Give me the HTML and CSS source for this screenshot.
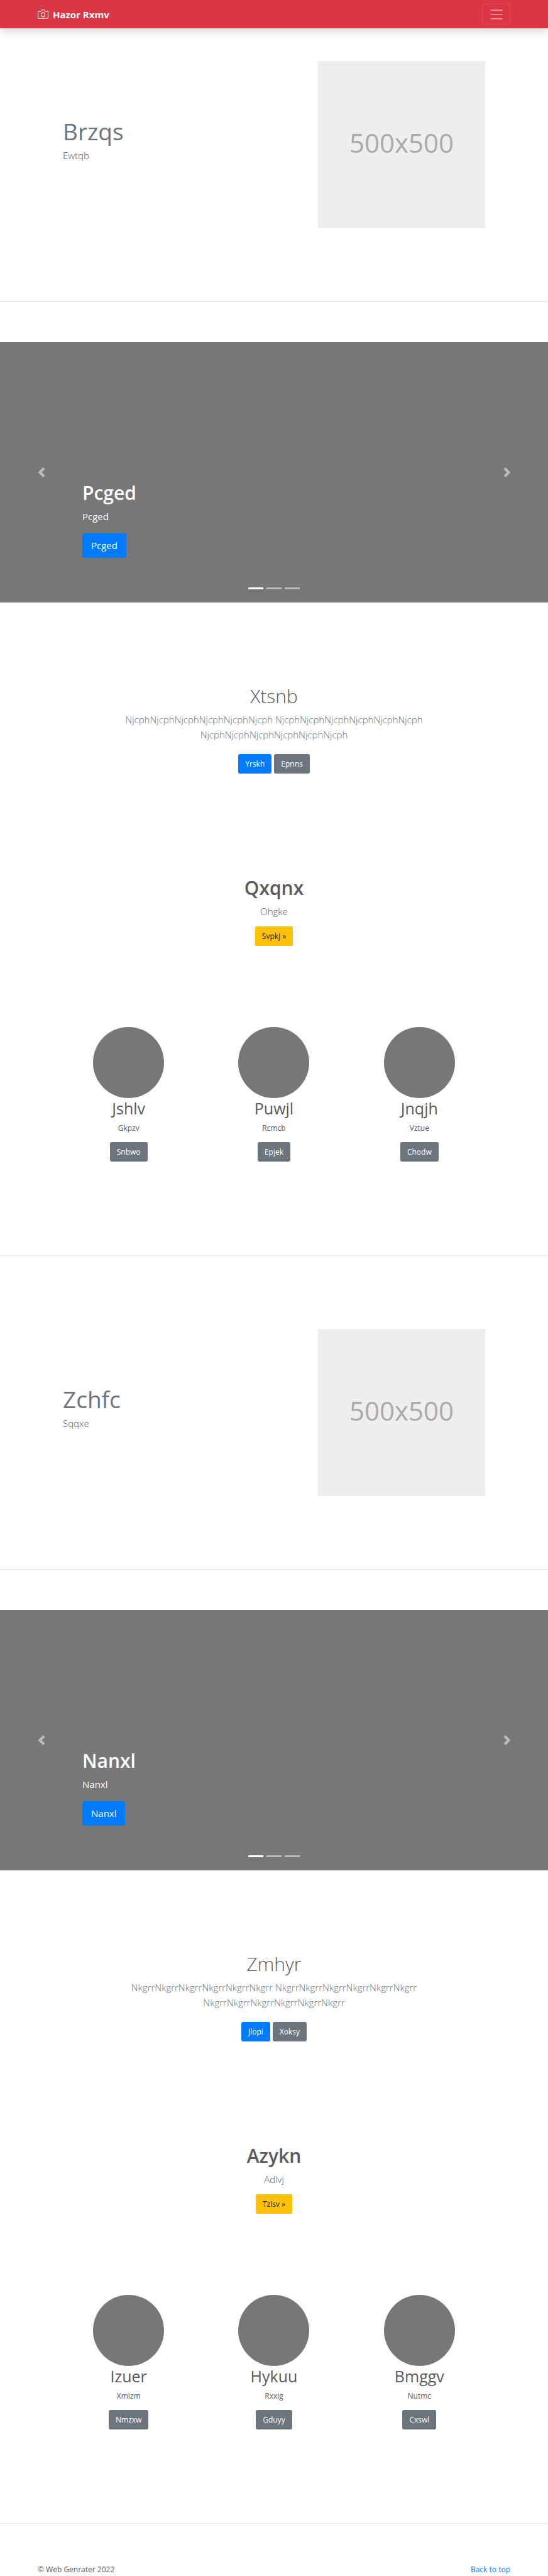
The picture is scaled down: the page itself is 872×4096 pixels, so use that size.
FILE: index.html
```html
<!DOCTYPE html>
<html lang="en">
<head>
<meta charset="utf-8">
<meta name="viewport" content="width=device-width, initial-scale=1">
<title>Hazor Rxmv</title>
<link rel="stylesheet" href="styles.css">
</head>
<body>
<header class="navbar" id="top">
  <a class="brand" href="#">
    <svg class="brand-icon" viewBox="0 0 20 17" fill="none" stroke="currentColor" stroke-width="1.300" aria-hidden="true">
      <path d="M2 3.200h3.100c.5 0 .8-.3 1-.7l.5-1.100c.2-.5.6-.8 1.100-.8h4.600c.5 0 .9.300 1.100.8l.5 1.100c.2.400.5.700 1 .700H18c.8 0 1.400.600 1.400 1.400v10.400c0 .8-.6 1.400-1.400 1.400H2c-.8 0-1.400-.6-1.400-1.400V4.600c0-.8.6-1.400 1.400-1.400z"/>
      <circle cx="10" cy="9.300" r="3.600"/>
    </svg>
    <strong>Hazor Rxmv</strong>
  </a>
  <button class="toggler" type="button" aria-label="Toggle navigation">
    <svg class="toggler-icon" viewBox="0 0 30 30" stroke="currentColor" stroke-width="2" stroke-linecap="square" aria-hidden="true"><path d="M5 7h20M5 15h20M5 23h20"/></svg>
  </button>
</header>
<main>
  <section class="featurette">
    <div class="featurette-text">
      <h2 class="featurette-title">Brzqs</h2>
      <p class="lead">Ewtqb</p>
    </div>
    <div class="placeholder" role="img" aria-label="500x500">500x500</div>
  </section>
  <hr class="divider">
  <section class="carousel">
    <button class="control" type="button" aria-label="Previous"><svg class="chevron" viewBox="0 0 8 8" fill="currentColor" aria-hidden="true"><path d="M5.250 0l-4 4 4 4 1.500-1.500L4.250 4l2.500-2.500L5.250 0z"/></svg></button>
    <div class="caption">
      <h1 class="title title-bold">Pcged</h1>
      <p class="caption-text">Pcged</p>
      <a class="btn btn-lg btn-primary" href="#">Pcged</a>
    </div>
    <button class="control" type="button" aria-label="Next"><svg class="chevron" viewBox="0 0 8 8" fill="currentColor" aria-hidden="true"><path d="M2.750 0l-1.500 1.500L3.750 4l-2.500 2.500L2.750 8l4-4-4-4z"/></svg></button>
    <div class="indicators"><span class="dot active"></span><span class="dot"></span><span class="dot"></span></div>
  </section>
  <section class="intro">
    <h1 class="title title-light">Xtsnb</h1>
    <p class="lead intro-text">NjcphNjcphNjcphNjcphNjcphNjcph NjcphNjcphNjcphNjcphNjcphNjcph NjcphNjcphNjcphNjcphNjcphNjcph</p>
    <div class="actions"><a class="btn btn-primary" href="#">Yrskh</a><a class="btn btn-secondary" href="#">Epnns</a></div>
  </section>
  <section class="callout">
    <h1 class="title title-bold">Qxqnx</h1>
    <p class="lead">Ohgke</p>
    <a class="btn btn-warning" href="#">Svpkj »</a>
  </section>
  <section class="columns">
    <article class="column"><div class="avatar"></div><h2 class="column-title">Jshlv</h2><p class="column-text">Gkpzv</p><a class="btn btn-secondary" href="#">Snbwo</a></article>
    <article class="column"><div class="avatar"></div><h2 class="column-title">Puwjl</h2><p class="column-text">Rcmcb</p><a class="btn btn-secondary" href="#">Epjek</a></article>
    <article class="column"><div class="avatar"></div><h2 class="column-title">Jnqjh</h2><p class="column-text">Vztue</p><a class="btn btn-secondary" href="#">Chodw</a></article>
  </section>
  <hr class="divider">
  <section class="featurette featurette-spaced">
    <div class="featurette-text">
      <h2 class="featurette-title">Zchfc</h2>
      <p class="lead">Sqqxe</p>
    </div>
    <div class="placeholder" role="img" aria-label="500x500">500x500</div>
  </section>
  <hr class="divider">
  <section class="carousel">
    <button class="control" type="button" aria-label="Previous"><svg class="chevron" viewBox="0 0 8 8" fill="currentColor" aria-hidden="true"><path d="M5.250 0l-4 4 4 4 1.500-1.500L4.250 4l2.500-2.500L5.250 0z"/></svg></button>
    <div class="caption">
      <h1 class="title title-bold">Nanxl</h1>
      <p class="caption-text">Nanxl</p>
      <a class="btn btn-lg btn-primary" href="#">Nanxl</a>
    </div>
    <button class="control" type="button" aria-label="Next"><svg class="chevron" viewBox="0 0 8 8" fill="currentColor" aria-hidden="true"><path d="M2.750 0l-1.500 1.500L3.750 4l-2.500 2.500L2.750 8l4-4-4-4z"/></svg></button>
    <div class="indicators"><span class="dot active"></span><span class="dot"></span><span class="dot"></span></div>
  </section>
  <section class="intro">
    <h1 class="title title-light">Zmhyr</h1>
    <p class="lead intro-text">NkgrrNkgrrNkgrrNkgrrNkgrrNkgrr NkgrrNkgrrNkgrrNkgrrNkgrrNkgrr NkgrrNkgrrNkgrrNkgrrNkgrrNkgrr</p>
    <div class="actions"><a class="btn btn-primary" href="#">Jlopi</a><a class="btn btn-secondary" href="#">Xoksy</a></div>
  </section>
  <section class="callout">
    <h1 class="title title-bold">Azykn</h1>
    <p class="lead">Adlvj</p>
    <a class="btn btn-warning" href="#">Tzisv »</a>
  </section>
  <section class="columns">
    <article class="column"><div class="avatar"></div><h2 class="column-title">Izuer</h2><p class="column-text">Xmizm</p><a class="btn btn-secondary" href="#">Nmzxw</a></article>
    <article class="column"><div class="avatar"></div><h2 class="column-title">Hykuu</h2><p class="column-text">Rxxig</p><a class="btn btn-secondary" href="#">Gduyy</a></article>
    <article class="column"><div class="avatar"></div><h2 class="column-title">Bmggv</h2><p class="column-text">Nutmc</p><a class="btn btn-secondary" href="#">Cxswl</a></article>
  </section>
  <hr class="divider">
</main>
<footer class="footer">
  <span>© Web Genrater 2022</span>
  <a class="footer-link" href="#top">Back to top</a>
</footer>
</body>
</html>
```
FILE: styles.css
```css
* {
  box-sizing: border-box;
}

body {
  margin: 0;
  background: #fff;
  color: #5a5a5a;
  font: 12px/20px "Segoe UI", "Open Sans", "Noto Sans", sans-serif;
}

h1, h2, p {
  margin: 0;
}

a {
  color: #007bff;
  text-decoration: none;
}

/* Navigation bar */
.navbar {
  display: flex;
  align-items: center;
  justify-content: space-between;
  height: 45px;
  padding: 0 60px;
  background: #dc3545;
  box-shadow: 0 6px 13px rgba(0, 0, 0, .15);
}

.brand {
  display: flex;
  align-items: center;
  gap: 7px;
  color: #fff;
  font-size: 15px;
}

.brand-icon {
  width: 17px;
  height: 15px;
}

.toggler {
  display: flex;
  align-items: center;
  justify-content: center;
  width: 45px;
  height: 33px;
  padding: 0;
  border: 1px solid rgba(255, 255, 255, .1);
  border-radius: 3px;
  background: transparent;
  color: rgba(255, 255, 255, .5);
}

.toggler-icon {
  width: 26px;
  height: 26px;
}

/* Featurette */
.featurette {
  display: flex;
  justify-content: space-between;
  padding: 52px 100px 116px;
}

.featurette-spaced {
  padding-top: 116px;
}

.featurette-text {
  padding-top: 88px;
}

.featurette-title {
  margin-bottom: 2px;
  color: #6c757d;
  font-size: 37px;
  font-weight: 400;
  line-height: 48px;
}

.lead {
  font-size: 15px;
  font-weight: 300;
  line-height: 24px;
}

.placeholder {
  display: flex;
  align-items: center;
  justify-content: center;
  width: 266px;
  height: 266px;
  padding-bottom: 6px;
  background: #eee;
  color: #aaa;
  font-size: 42px;
}

.divider {
  height: 1px;
  margin: 0;
  border: 0;
  background: rgba(0, 0, 0, .1);
}

/* Carousel */
.carousel {
  position: relative;
  display: grid;
  grid-template-columns: 131px 1fr 131px;
  min-height: 414px;
  margin-top: 64px;
  background: #777;
  color: #fff;
}

.control {
  padding: 0;
  border: 0;
  background: transparent;
  color: rgba(255, 255, 255, .5);
}

.chevron {
  display: block;
  width: 16px;
  height: 16px;
  margin: 0 auto;
}

.caption {
  align-self: end;
  padding-bottom: 71px;
}

.caption-text {
  margin: 6px 0 15px;
  font-size: 15px;
  line-height: 24px;
}

.indicators {
  position: absolute;
  right: 0;
  bottom: 21px;
  left: 0;
  display: flex;
  justify-content: center;
  gap: 5px;
}

.dot {
  width: 24px;
  height: 3px;
  background: rgba(255, 255, 255, .5);
}

.dot.active {
  background: #fff;
}

.title {
  font-size: 30px;
  line-height: 38px;
}

.title-bold {
  font-weight: 600;
}

.title-light {
  font-weight: 300;
}

/* Buttons */
.btn {
  display: inline-block;
  padding: 5px 11px;
  border-radius: 3px;
  color: #fff;
  line-height: 21px;
}

.btn-lg {
  padding: 7px 14px;
  border-radius: 4px;
  font-size: 15px;
  line-height: 25px;
}

.btn-primary {
  background: #007bff;
}

.btn-secondary {
  background: #6c757d;
}

.btn-warning {
  background: #ffc107;
  color: #212529;
}

/* Centered sections */
.intro,
.callout {
  display: flex;
  flex-direction: column;
  align-items: center;
  text-align: center;
}

.intro {
  padding: 130px 180px 0;
}

.intro-text {
  margin: 6px 0 19px;
  color: #6c757d;
}

.actions {
  display: flex;
  gap: 4px;
}

.callout {
  padding: 163px 60px 0;
}

.callout .lead {
  margin: 6px 0 12px;
}

.columns {
  display: grid;
  grid-template-columns: repeat(3, 1fr);
  padding: 129px 89px 149px;
}

.column {
  display: flex;
  flex-direction: column;
  align-items: center;
}

.avatar {
  width: 113px;
  height: 113px;
  border-radius: 50%;
  background: #777;
}

.column-title {
  font-size: 25px;
  font-weight: 400;
  line-height: 32px;
}

.column-text {
  margin: 6px 0 12px;
}

.footer {
  display: flex;
  justify-content: space-between;
  padding: 65px 60px 2px;
  line-height: 16px;
}
```
